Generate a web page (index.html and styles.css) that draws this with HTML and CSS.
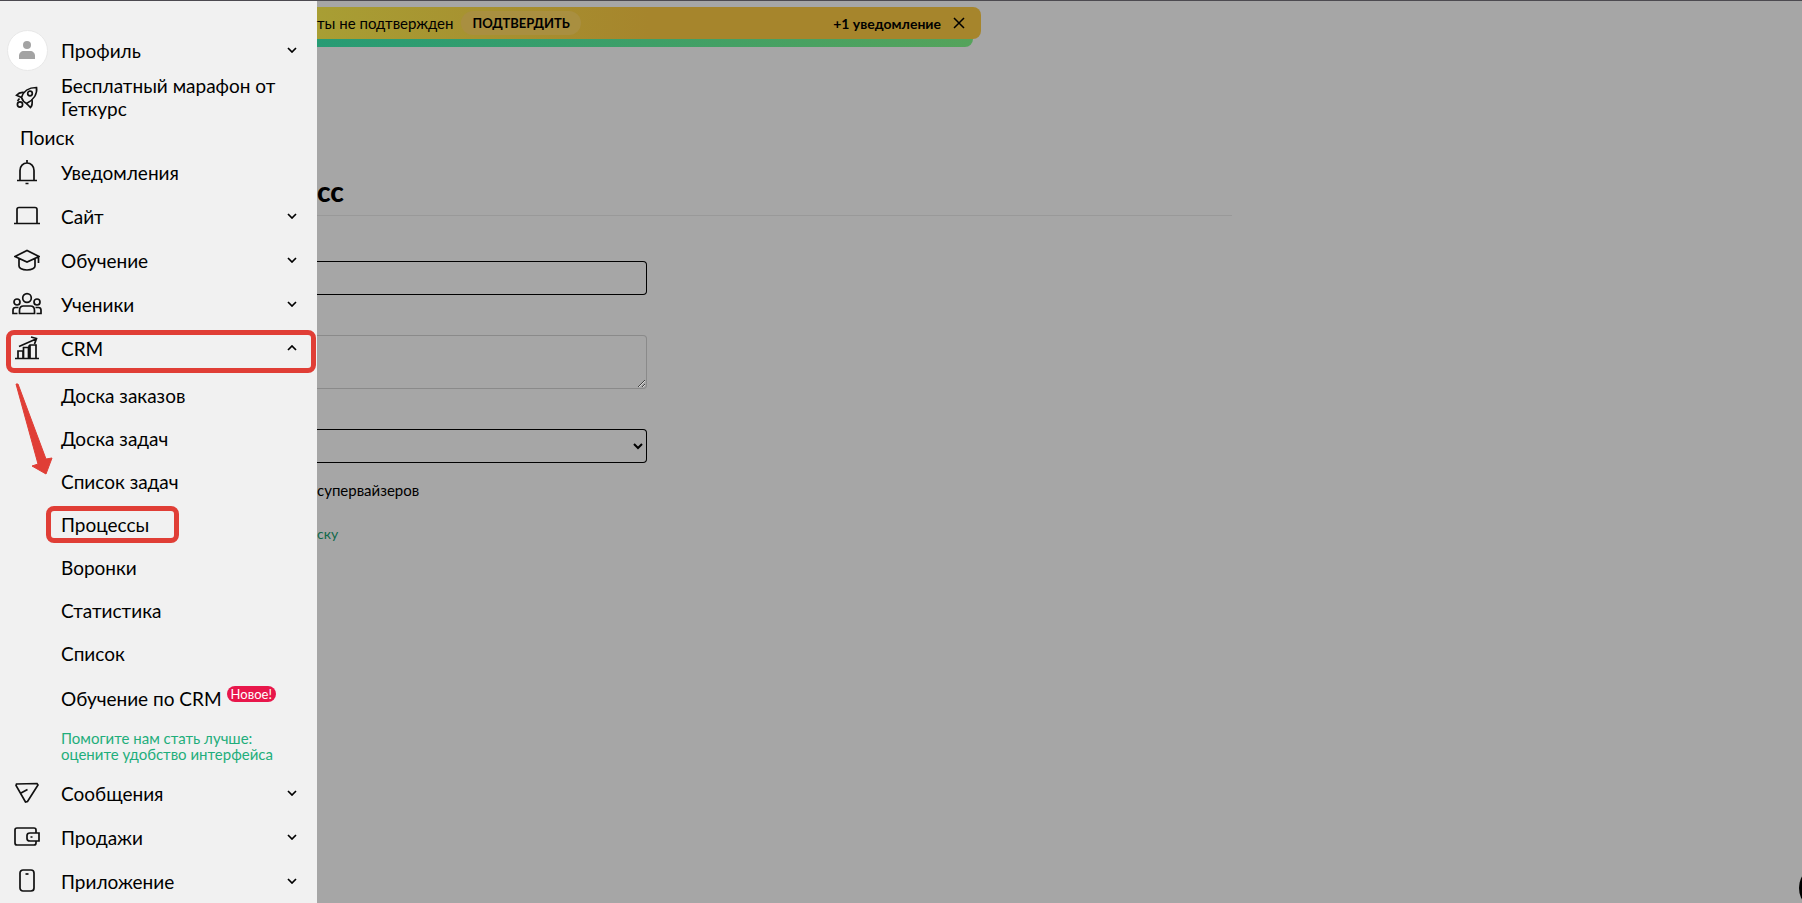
FILE: index.html
```
<!DOCTYPE html>
<html lang="ru">
<head>
    <meta charset="UTF-8">
    <meta name="viewport" content="width=device-width, initial-scale=1.0">
    <title>Процессы</title>
    <link rel="stylesheet" href="styles.css">
</head>
<body>
    <svg width="0" height="0" class="sprite">
        <symbol id="chevron" viewBox="0 0 10 6">
            <path d="M1 1l4 4 4-4" fill="none" stroke="currentColor" stroke-width="1.7"/>
        </symbol>
    </svg>

    <div class="layout">
        <nav class="sidebar">
            <a class="menu-item" href="#">
                <span class="menu-icon">
                    <span class="avatar">
                        <svg width="18" height="18" viewBox="0 0 18 18">
                            <circle cx="9" cy="4" r="4"/>
                            <path d="M1 18v-3c0-3 2-5 5-5h6c3 0 5 2 5 5v3z"/>
                        </svg>
                    </span>
                </span>
                <span class="menu-text">Профиль</span>
                <svg class="chevron"><use href="#chevron"/></svg>
            </a>
            <a class="menu-item menu-item-tall" href="#">
                <span class="menu-icon">
                    <svg width="24" height="24" viewBox="0 0 24 24">
                        <path d="M6.500 12.500C8 7.500 12 2.500 21.500 2.500C22.500 9 18.500 15 11.500 18.500C9.500 17.500 7.500 15.500 6.500 12.500z"/>
                        <path d="M9 7.500C6 7 3.500 8 1.500 10.200L6.500 12.500M17 14.500C17.500 18 17 21 15.500 22.500L11.500 18.500"/>
                        <circle cx="15" cy="8.500" r="2.300"/>
                        <circle cx="5" cy="19.500" r="2.600"/>
                        <path d="M2.500 16l2-2.500"/>
                    </svg>
                </span>
                <span class="menu-text">Бесплатный марафон от Геткурс</span>
            </a>
            <a class="menu-search" href="#">Поиск</a>
            <a class="menu-item" href="#">
                <span class="menu-icon">
                    <svg width="24" height="26" viewBox="0 0 24 26">
                        <path d="M2 21.500h20M5 21.500v-10c0-4.500 3-7.500 7-7.500s7 3 7 7.500v10M12 4V1M10.500 24.500h3"/>
                    </svg>
                </span>
                <span class="menu-text">Уведомления</span>
            </a>
            <a class="menu-item" href="#">
                <span class="menu-icon">
                    <svg width="26" height="24" viewBox="0 0 26 24">
                        <path d="M0 19.500h26M3 19V5.500c0-1 1-2 2-2h16c1 0 2 1 2 2V19"/>
                    </svg>
                </span>
                <span class="menu-text">Сайт</span>
                <svg class="chevron"><use href="#chevron"/></svg>
            </a>
            <a class="menu-item" href="#">
                <span class="menu-icon">
                    <svg width="26" height="24" viewBox="0 0 26 24">
                        <path d="M1 8.500L13 2.500l12 6-12 5.500zM5 10.500V18c0 2 3 4 8 4s8-2 8-4v-7.500M24.500 9v6"/>
                    </svg>
                </span>
                <span class="menu-text">Обучение</span>
                <svg class="chevron"><use href="#chevron"/></svg>
            </a>
            <a class="menu-item" href="#">
                <span class="menu-icon">
                    <svg width="30" height="24" viewBox="0 0 30 24">
                        <circle cx="15" cy="6" r="4.300"/>
                        <circle cx="5" cy="10" r="3"/>
                        <circle cx="25" cy="10" r="3"/>
                        <path d="M7.500 21.500v-3c0-3 2-4.500 4-4.500h7c2 0 4 1.500 4 4.500v3zM5.500 21.500H1V18c0-1.500 1-2.500 2.500-2.500h3M24.500 21.500H29V18c0-1.500-1-2.500-2.500-2.500h-3"/>
                    </svg>
                </span>
                <span class="menu-text">Ученики</span>
                <svg class="chevron"><use href="#chevron"/></svg>
            </a>
            <a class="menu-item menu-item-marked" href="#">
                <span class="menu-icon">
                    <svg width="24" height="24" viewBox="0 0 24 24">
                        <path d="M0 22.500h24M3 22v-7h5v7M8.500 22V11.500h5V22M14 12V10l1-1h6v13M15 9v13M4 10.500L21 3M16 1l5.500 1.500L19.500 8"/>
                    </svg>
                </span>
                <span class="menu-text">CRM</span>
                <svg class="chevron chevron-up"><use href="#chevron"/></svg>
            </a>

            <div class="submenu">
                <ul>
                    <li><a href="#">Доска заказов</a></li>
                    <li><a href="#">Доска задач</a></li>
                    <li><a href="#">Список задач</a></li>
                    <li><a class="submenu-marked" href="#">Процессы</a></li>
                    <li><a href="#">Воронки</a></li>
                    <li><a href="#">Статистика</a></li>
                    <li><a href="#">Список</a></li>
                    <li class="submenu-new"><a href="#">Обучение по CRM</a><span class="badge">Новое!</span></li>
                    <li class="submenu-help"><a href="#">Помогите нам стать лучше: оцените удобство интерфейса</a></li>
                </ul>
                <svg class="arrow" width="40" height="94" viewBox="0 0 40 94">
                    <path d="M2 1h2L32 76l6-1L32 91 18 83l6-2z" stroke="#e03e36" stroke-linejoin="round"/>
                </svg>
            </div>

            <a class="menu-item" href="#">
                <span class="menu-icon">
                    <svg width="24" height="24" viewBox="0 0 24 24">
                        <path d="M1 4.500L1.500 3 22 2.500l1 1.500L12.500 20.500l-2 .500zM6 12l6.500-3.500"/>
                    </svg>
                </span>
                <span class="menu-text">Сообщения</span>
                <svg class="chevron"><use href="#chevron"/></svg>
            </a>
            <a class="menu-item" href="#">
                <span class="menu-icon">
                    <svg width="26" height="24" viewBox="0 0 26 24">
                        <path d="M22 8V5c0-1-1-2-2-2H3C2 3 1 4 1 5v13c0 1 1 2 2 2h17c1 0 2-1 2-2v-2M25 8H16c-2 0-3 1-3 2.500v3c0 1.500 1 2.500 3 2.500h9zM16.500 12h2"/>
                    </svg>
                </span>
                <span class="menu-text">Продажи</span>
                <svg class="chevron"><use href="#chevron"/></svg>
            </a>
            <a class="menu-item" href="#">
                <span class="menu-icon">
                    <svg width="16" height="24" viewBox="0 0 16 24">
                        <rect x="1" y="1" width="14" height="21" rx="3"/>
                        <path d="M6.500 5h3"/>
                    </svg>
                </span>
                <span class="menu-text">Приложение</span>
                <svg class="chevron"><use href="#chevron"/></svg>
            </a>
        </nav>

        <main class="page">
            <div class="notice-stack">
                <div class="notice">
                    <span class="notice-text">ты не подтвержден</span>
                    <button class="notice-confirm" type="button">ПОДТВЕРДИТЬ</button>
                    <strong class="notice-more">+1 уведомление</strong>
                    <button class="notice-close" type="button" aria-label="Закрыть">
                        <svg width="12" height="12" viewBox="0 0 12 12"><path d="M1 1l10 10M11 1L1 11"/></svg>
                    </button>
                </div>
                <div class="notice-back"></div>
            </div>

            <form class="process-form">
                <h1>сс</h1>
                <input class="field" type="text" aria-label="Название">
                <textarea class="field field-area" aria-label="Описание"></textarea>
                <select class="field" aria-label="Тип процесса"><option></option></select>
                <p>супервайзеров</p>
                <a class="back-link" href="#">ску</a>
            </form>
        </main>
    </div>

    <button class="chat-button" type="button" aria-label="Чат"></button>
</body>
</html>
```
FILE: styles.css
```
* {
    margin: 0;
    padding: 0;
    box-sizing: border-box;
}

body {
    font-family: Lato, "Open Sans", sans-serif;
    font-size: 14px;
    color: #000;
    background-color: #a6a6a6;
}

a {
    color: inherit;
    text-decoration: none;
}

button {
    font-family: inherit;
    border: none;
    cursor: pointer;
}

.sprite {
    position: absolute;
}

.layout {
    display: flex;
    height: 100vh;
    border-top: 1px solid #4c4a50;
    overflow: hidden;
}

/* меню */
.sidebar {
    flex: none;
    width: 317px;
    padding-top: 27px;
    background-color: #f1f1f1;
    font-size: 19px;
    line-height: 23px;
}

.menu-item {
    position: relative;
    display: flex;
    align-items: center;
    height: 44px;
    padding-right: 20px;
}

.menu-item-tall {
    height: 50px;
}

.menu-icon {
    display: flex;
    justify-content: center;
    flex: none;
    width: 54px;
    margin-right: 7px;
}

.menu-icon svg {
    stroke: #111;
    stroke-width: 1.7;
    fill: none;
}

.avatar {
    display: flex;
    align-items: center;
    justify-content: center;
    width: 41px;
    height: 41px;
    border: 1px solid #e8e8e8;
    border-radius: 50%;
    background-color: #fff;
}

.avatar svg {
    fill: #a3a3a3;
    stroke: none;
}

.menu-text {
    flex: 1;
}

.chevron {
    width: 10px;
    height: 6px;
}

.chevron-up {
    transform: rotate(180deg);
}

.menu-search {
    display: block;
    padding: 4px 20px 1px;
}

.menu-item-marked::after,
.submenu-marked::after {
    content: "";
    position: absolute;
    border: 5px solid #e03e36;
    border-radius: 8px;
}

.menu-item-marked::after {
    inset: 4px 1px -3px 6px;
}

.submenu {
    position: relative;
    padding-top: 4px;
}

.submenu ul {
    list-style: none;
}

.submenu li {
    display: flex;
    align-items: center;
    height: 43px;
    padding-left: 61px;
}

.submenu-marked {
    position: relative;
}

.submenu-marked::after {
    inset: -7px -30px -7px -15px;
}

.submenu .submenu-new {
    height: 46px;
}

.badge {
    margin: -8px 0 0 5px;
    padding: 0 4px;
    border-radius: 8px;
    background-color: #e8174b;
    color: #fff;
    font-size: 13px;
    line-height: 16px;
}

.submenu .submenu-help {
    height: 50px;
    padding-right: 40px;
    color: #1fae7b;
    font-size: 15px;
    line-height: 16px;
}

.arrow {
    position: absolute;
    top: 13px;
    left: 14px;
    fill: #e03e36;
}

/* страница */
.page {
    flex: 1;
    min-width: 0;
}

.notice-stack {
    max-width: 664px;
    padding-top: 6px;
}

.notice {
    display: flex;
    align-items: center;
    height: 32px;
    padding-right: 16px;
    border-radius: 0 8px 8px 0;
    background: linear-gradient(90deg, #a89e34, #a6852c 50%, #a6852c);
}

.notice-text {
    font-size: 15px;
}

.notice-confirm {
    height: 24px;
    margin-left: 8px;
    padding: 0 11px;
    border-radius: 12px;
    background-color: #a98f40;
    font-size: 13px;
    font-weight: bold;
}

.notice-more {
    margin-left: auto;
}

.notice-close {
    display: flex;
    margin-left: 12px;
    background: none;
}

.notice-close svg {
    fill: none;
    stroke: #000;
    stroke-width: 1.5;
}

.notice-back {
    height: 8px;
    margin-right: 8px;
    border-radius: 0 0 8px 0;
    background: linear-gradient(90deg, #279b74, #55a35b);
}

.process-form {
    max-width: 915px;
}

.process-form h1 {
    margin: 126px 0 45px;
    padding-bottom: 6px;
    border-bottom: 1px solid #999;
    font-size: 28px;
    font-weight: 900;
    line-height: 36px;
}

.field {
    display: block;
    width: 330px;
    height: 34px;
    margin-bottom: 40px;
    border: 1px solid #000;
    border-left: none;
    border-radius: 0 4px 4px 0;
    background-color: transparent;
}

.field-area {
    height: 54px;
    border-color: #8a8a8a;
}

.process-form p {
    margin: -23px 0 24px;
    font-size: 15px;
    line-height: 20px;
}

.back-link {
    color: #12694b;
    line-height: 20px;
}

.chat-button {
    position: fixed;
    right: -45px;
    bottom: -9px;
    width: 48px;
    height: 48px;
    border-radius: 50%;
    background-color: #000;
}
```
